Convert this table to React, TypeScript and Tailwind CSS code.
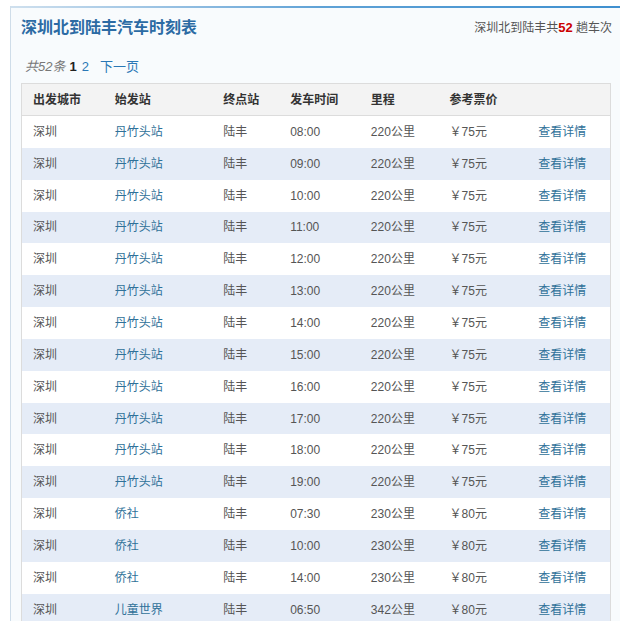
import React from 'react';

type Row = { from: string; station: string; to: string; time: string; km: string; price: string };

const rows: Row[] = [
  ...['08:00', '09:00', '10:00', '11:00', '12:00', '13:00', '14:00', '15:00', '16:00', '17:00', '18:00', '19:00'].map((t) => ({
    from: '深圳',
    station: '丹竹头站',
    to: '陆丰',
    time: t,
    km: '220公里',
    price: '￥75元',
  })),
  { from: '深圳', station: '侨社', to: '陆丰', time: '07:30', km: '230公里', price: '￥80元' },
  { from: '深圳', station: '侨社', to: '陆丰', time: '10:00', km: '230公里', price: '￥80元' },
  { from: '深圳', station: '侨社', to: '陆丰', time: '14:00', km: '230公里', price: '￥80元' },
  { from: '深圳', station: '儿童世界', to: '陆丰', time: '06:50', km: '342公里', price: '￥80元' },
];

// column widths, summed = 590
const cols = ['w-[82px]', 'w-[109px]', 'w-[67px]', 'w-[81px]', 'w-[79px]', 'w-[89px]', 'w-[83px]'];

const App: React.FC = () => {
  return (
    <div
      className="min-h-[621px] bg-white pt-[6px] pl-[10px] overflow-hidden"
      style={{ fontFamily: '"Liberation Sans", "Noto Sans CJK SC", sans-serif' }}
    >
      <div className="w-[620px] border-l border-[#cfdde9] bg-[#f8fbfd]">
        {/* top accent */}
        <div className="h-[2px] bg-gradient-to-r from-[#cfe0ee] via-[#5fa2d6] to-[#3d8fcf]" />

        {/* Title bar */}
        <div className="flex items-center justify-between h-[39px] pl-[10px] pr-[18px]">
          <h1 className="text-[16px] font-bold text-[#2c6ba4]">深圳北到陆丰汽车时刻表</h1>
          <span className="text-[12px] text-[#555]">
            深圳北到陆丰共<b className="text-[#cc0000] text-[13px]">52</b> 趟车次
          </span>
        </div>

        {/* Pagination */}
        <div className="flex items-center h-[20px] mt-[10px] pl-[14px] text-[13px]">
          <i className="text-[#777]">共52条</i>
          <b className="ml-[4px] text-[#222]">1</b>
          <a className="ml-[5px] text-[#2a78b6]">2</a>
          <a className="ml-[11px] text-[#2a78b6]">下一页</a>
        </div>

        {/* Table */}
        <div className="mt-[6px] ml-[10px] w-[590px] border border-[#dcdcdc] text-[12px]">
          <div className="flex h-[32px] items-center bg-[#f3f3f3] border-b border-[#dcdcdc] text-[#333] font-bold">
            {['出发城市', '始发站', '终点站', '发车时间', '里程', '参考票价', ''].map((h, i) => (
              <div key={i} className={`${cols[i]} pl-[11px]`}>
                {h}
              </div>
            ))}
          </div>
          {rows.map((r, i) => (
            <div
              key={i}
              className={`flex h-[31.85px] items-center text-[#555] ${i % 2 === 1 ? 'bg-[#e5ecf7]' : 'bg-white'}`}
            >
              <div className={`${cols[0]} pl-[11px]`}>{r.from}</div>
              <div className={`${cols[1]} pl-[11px] text-[#2f7199]`}>{r.station}</div>
              <div className={`${cols[2]} pl-[11px]`}>{r.to}</div>
              <div className={`${cols[3]} pl-[11px]`}>{r.time}</div>
              <div className={`${cols[4]} pl-[11px]`}>{r.km}</div>
              <div className={`${cols[5]} pl-[11px]`}>{r.price}</div>
              <div className={`${cols[6]} pl-[11px] text-[#2f7199]`}>查看详情</div>
            </div>
          ))}
        </div>
      </div>
    </div>
  );
};

export default App;
